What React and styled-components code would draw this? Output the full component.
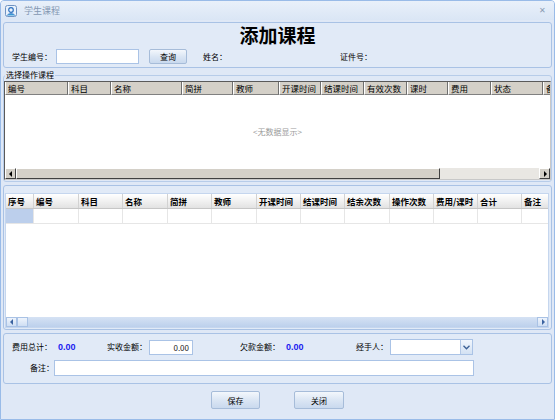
import React from "react";
import styled, { createGlobalStyle } from "styled-components";

const GlobalStyle = createGlobalStyle`
  html, body {
    margin: 0;
    padding: 0;
    background: #ffffff;
  }
  body {
    font-family: "Noto Sans CJK SC", "Noto Sans", sans-serif;
    font-size: 8px;
    color: #000;
  }
`;

const Window = styled.div`
  width: 555px;
  height: 420px;
  box-sizing: border-box;
  border: 1px solid #99bbe8;
  border-radius: 4px 4px 0 0;
  background: #dfe8f6;
  display: flex;
  flex-direction: column;
  overflow: hidden;
`;

const TitleBar = styled.div`
  height: 19px;
  display: flex;
  align-items: center;
  padding: 0 6px 0 4px;
  background: linear-gradient(#e9f0fa, #dae6f5);
`;

const TitleText = styled.span`
  margin-left: 7px;
  font-size: 9px;
  line-height: 19px;
  color: #8397b2;
  flex: 1;
`;

const Close = styled.span`
  font-family: "Liberation Sans", sans-serif;
  font-size: 8px;
  color: #8a9bb2;
  margin-right: 2px;
`;

const Body = styled.div`
  padding: 2px 2px 0;
  display: flex;
  flex-direction: column;
`;

const Panel = styled.div`
  border: 1px solid #a9c2e5;
  border-radius: 3px;
  background: #e1eaf7;
  box-sizing: border-box;
  height: ${(p) => p.h}px;
  margin-top: ${(p) => p.mt || 0}px;
  padding: ${(p) => p.pad || "0"};
  display: flex;
  flex-direction: column;
`;

const Heading = styled.h1`
  margin: 0;
  padding-top: 1px;
  text-align: center;
  font-size: 19px;
  font-weight: 700;
  line-height: 22px;
  color: #000;
`;

const Row = styled.div`
  display: flex;
  align-items: center;
  height: ${(p) => p.h || 15}px;
  margin-top: ${(p) => p.mt || 0}px;
  padding-left: 8px;
`;

const Label = styled.span`
  width: ${(p) => p.w}px;
  flex-shrink: 0;
  white-space: nowrap;
  text-align: ${(p) => (p.right ? "right" : "left")};
  font-size: 8px;
  line-height: 12px;
`;

const Spacer = styled.span`
  width: ${(p) => p.w}px;
  flex-shrink: 0;
`;

const Input = styled.div`
  width: ${(p) => p.w}px;
  height: ${(p) => p.h || 15}px;
  box-sizing: border-box;
  flex-shrink: 0;
  background: #fff;
  border: 1px solid #aac3e6;
  font-size: 8px;
  line-height: ${(p) => (p.h || 15) - 2}px;
  text-align: right;
  padding-right: 3px;
  color: #222;
`;

const Button = styled.button`
  width: ${(p) => p.w}px;
  height: ${(p) => p.h}px;
  flex-shrink: 0;
  padding: 0;
  border: 1px solid #a6bcd9;
  border-radius: 2px;
  background: linear-gradient(#f3f7fc, #dbe6f4 50%, #c9d9ee);
  font-family: "Noto Sans CJK SC", sans-serif;
  font-size: 8px;
  color: #000;
`;

const Money = styled.span`
  width: ${(p) => p.w}px;
  flex-shrink: 0;
  font-family: "Liberation Sans", sans-serif;
  font-weight: 700;
  font-size: 9px;
  color: #1b1bf0;
`;

const Select = styled.div`
  width: 83px;
  height: 16px;
  box-sizing: border-box;
  display: flex;
  justify-content: flex-end;
  background: #fff;
  border: 1px solid #aac3e6;
`;

const SelectBtn = styled.div`
  width: 11px;
  height: 14px;
  display: flex;
  align-items: center;
  justify-content: center;
  border-left: 1px solid #b3c8e6;
  background: linear-gradient(#f1f6fd, #d3e1f3);
`;

const Fieldset = styled.fieldset`
  margin: 2px 0 0;
  padding: 0 0 1px;
  min-width: 0;
  border: 1px solid #b7cce9;
  border-radius: 3px;
`;

const Legend = styled.legend`
  padding: 0 1px;
  margin-left: 1px;
  font-size: 8px;
  line-height: 10px;
`;

const ClassicGrid = styled.div`
  margin-top: 1px;
  height: 99px;
  box-sizing: border-box;
  border: 1px solid #5a5a5a;
  border-right-color: #c8c8c8;
  border-bottom-color: #c8c8c8;
  display: flex;
  flex-direction: column;
  background: #fff;
  overflow: hidden;
`;

const ClassicHead = styled.div`
  display: flex;
  height: 13px;
  flex-shrink: 0;
  background: #d4d0c8;
`;

const ClassicCell = styled.div`
  width: ${(p) => p.w}px;
  flex-shrink: 0;
  box-sizing: border-box;
  border-left: 1px solid #fff;
  border-right: 1px solid #6f6f6f;
  border-bottom: 1px solid #808080;
  padding-left: 2px;
  font-size: 8.5px;
  line-height: 12px;
  white-space: nowrap;
  overflow: hidden;
`;

const EmptyBody = styled.div`
  flex: 1;
  display: flex;
  align-items: center;
  justify-content: center;
  color: #9a9a9a;
  font-size: 8px;
`;

const Scroll = styled.div`
  height: ${(p) => p.h}px;
  flex-shrink: 0;
  display: flex;
  background: ${(p) => p.bg};
`;

const ClassicBtn = styled.div`
  width: 11px;
  height: 11px;
  box-sizing: border-box;
  flex-shrink: 0;
  display: flex;
  align-items: center;
  justify-content: center;
  background: #d4d0c8;
  border-top: 1px solid #fff;
  border-left: 1px solid #fff;
  border-right: 1px solid #404040;
  border-bottom: 1px solid #404040;
`;

const ClassicThumb = styled.div`
  width: 424px;
  box-sizing: border-box;
  background: #d4d0c8;
  border-top: 1px solid #fff;
  border-left: 1px solid #fff;
  border-right: 1px solid #404040;
  border-bottom: 1px solid #404040;
`;

const Track = styled.div`
  flex: 1;
`;

const BlueGrid = styled.div`
  flex: 1;
  display: flex;
  flex-direction: column;
  background: #fff;
  border: 1px solid #c5d6ee;
  overflow: hidden;
`;

const BlueHead = styled.div`
  display: flex;
  height: 15px;
  flex-shrink: 0;
  background: linear-gradient(#ffffff, #f1f1f1 50%, #e2e2e2);
  border-bottom: 1px solid #c6c6c6;
  box-sizing: border-box;
`;

const HeadCell = styled.div`
  width: ${(p) => p.w}px;
  flex-shrink: 0;
  box-sizing: border-box;
  border-right: 1px solid #d2d2d2;
  padding-left: 2px;
  font-size: 8.5px;
  font-weight: 700;
  line-height: 14px;
  white-space: nowrap;
  overflow: hidden;
`;

const DataRow = styled.div`
  display: flex;
  height: 15px;
  flex-shrink: 0;
  border-bottom: 1px solid #e6e6e6;
  box-sizing: border-box;
`;

const DataCell = styled.div`
  width: ${(p) => p.w}px;
  flex-shrink: 0;
  box-sizing: border-box;
  border-right: 1px solid #e6e6e6;
  background: ${(p) => (p.sel ? "#bccfec" : "#fff")};
`;

const GridFill = styled.div`
  flex: 1;
`;

const BlueBtn = styled.div`
  width: 11px;
  height: 10px;
  box-sizing: border-box;
  flex-shrink: 0;
  display: flex;
  align-items: center;
  justify-content: center;
  border: 1px solid #a9c2e5;
  background: linear-gradient(#eef4fc, #cfdef3);
`;

const Footer = styled.div`
  display: flex;
  justify-content: center;
  gap: 34px;
  margin-top: 7px;
`;

const Arrow = ({ dir, color = "#000" }) => (
  <svg width="4" height="6" viewBox="0 0 4 6">
    {dir === "left" ? (
      <polygon points="3,0 3,6 0,3" fill={color} />
    ) : (
      <polygon points="1,0 1,6 4,3" fill={color} />
    )}
  </svg>
);

const WinIcon = () => (
  <svg width="12" height="12" viewBox="0 0 12 12">
    <rect x="0.5" y="0.5" width="11" height="11" rx="2" fill="#e8f1fb" stroke="#6f93c2" />
    <circle cx="6" cy="5" r="2.3" fill="none" stroke="#2f72c0" strokeWidth="1.2" />
    <path d="M2.2 10.5 C3 8 9 8 9.8 10.5" fill="#3aa0d8" stroke="#2f72c0" strokeWidth="0.8" />
  </svg>
);

const topCols = [
  ["编号", 63], ["科目", 43], ["名称", 71], ["简拼", 51], ["教师", 46],
  ["开课时间", 42], ["结课时间", 43], ["有效次数", 43], ["课时", 41],
  ["费用", 43], ["状态", 52], ["备注", 50],
];

const bottomCols = [
  ["序号", 28], ["编号", 45], ["科目", 44], ["名称", 45], ["简拼", 44],
  ["教师", 45], ["开课时间", 44], ["结课时间", 44], ["结余次数", 45],
  ["操作次数", 44], ["费用/课时", 44], ["合计", 44], ["备注", 28],
];

const App = () => {
  return (
    <>
      <GlobalStyle />
      <Window>
        <TitleBar>
          <WinIcon />
          <TitleText>学生课程</TitleText>
          <Close>✕</Close>
        </TitleBar>
        <Body>
          <Panel h={46}>
            <Heading>添加课程</Heading>
            <Row mt={3}>
              <Label w={44}>学生编号：</Label>
              <Input w={83} />
              <Spacer w={10} />
              <Button w={38} h={15}>查询</Button>
              <Spacer w={16} />
              <Label w={137}>姓名：</Label>
              <Label w={60}>证件号：</Label>
            </Row>
          </Panel>

          <Fieldset>
            <Legend>选择操作课程</Legend>
            <ClassicGrid>
              <ClassicHead>
                {topCols.map(([t, w]) => (
                  <ClassicCell key={t} w={w}>{t}</ClassicCell>
                ))}
              </ClassicHead>
              <EmptyBody>&lt;无数据显示&gt;</EmptyBody>
              <Scroll h={11} bg="#e9e7e3">
                <ClassicBtn><Arrow dir="left" /></ClassicBtn>
                <ClassicThumb />
                <Track />
                <ClassicBtn><Arrow dir="right" /></ClassicBtn>
              </Scroll>
            </ClassicGrid>
          </Fieldset>

          <Panel h={145} mt={3} pad="7px 2px 1px 1px">
            <BlueGrid>
              <BlueHead>
                {bottomCols.map(([t, w]) => (
                  <HeadCell key={t} w={w}>{t}</HeadCell>
                ))}
              </BlueHead>
              <DataRow>
                {bottomCols.map(([t, w], i) => (
                  <DataCell key={t} w={w} sel={i === 0} />
                ))}
              </DataRow>
              <GridFill />
              <Scroll h={10} bg="linear-gradient(#d5e2f4, #bcd0ec)">
                <BlueBtn><Arrow dir="left" color="#3b63a0" /></BlueBtn>
                <BlueBtn />
                <Track />
                <BlueBtn><Arrow dir="right" color="#3b63a0" /></BlueBtn>
              </Scroll>
            </BlueGrid>
          </Panel>

          <Panel h={51} mt={3} pad="5px 0 0">
            <Row h={16}>
              <Label w={46}>费用总计：</Label>
              <Money w={49}>0.00</Money>
              <Label w={42}>实收金额：</Label>
              <Input w={44} h={15}>0.00</Input>
              <Spacer w={47} />
              <Label w={46}>欠款金额：</Label>
              <Money w={70}>0.00</Money>
              <Label w={34}>经手人：</Label>
              <Select>
                <SelectBtn>
                  <svg width="7" height="5" viewBox="0 0 7 5">
                    <path d="M0.5 0.8 L3.5 3.8 L6.5 0.8" fill="none" stroke="#3b5f94" strokeWidth="1.3" />
                  </svg>
                </SelectBtn>
              </Select>
            </Row>
            <Row h={16} mt={5}>
              <Label w={42} right>备注：</Label>
              <Input w={420} h={16} />
            </Row>
          </Panel>

          <Footer>
            <Button w={49} h={18}>保存</Button>
            <Button w={50} h={18}>关闭</Button>
          </Footer>
        </Body>
      </Window>
    </>
  );
};

export default App;
